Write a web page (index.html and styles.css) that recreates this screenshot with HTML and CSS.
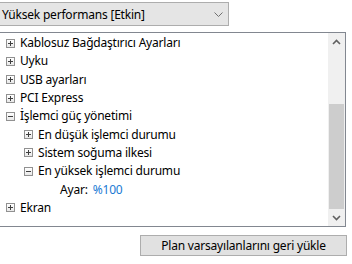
FILE: index.html
```html
<!DOCTYPE html>
<html lang="tr">

<head>
	<meta charset="UTF-8">
	<title>Güç Seçenekleri</title>
	<link rel="stylesheet" href="styles.css">
</head>

<body>
	<div class="page">
		<div class="combo">
			<span class="combo-text">Yüksek performans [Etkin]</span>
			<svg class="chevron" width="9" height="5" viewBox="0 0 9 5"><path d="M0.5 0.5 L4.5 4.5 L8.5 0.5" fill="none" stroke="#707070"/></svg>
		</div>

		<div class="tree">
			<div class="rows">
				<div class="row lvl0"><span class="exp plus"></span>Kablosuz Bağdaştırıcı Ayarları</div>
				<div class="row lvl0"><span class="exp plus"></span>Uyku</div>
				<div class="row lvl0"><span class="exp plus"></span>USB ayarları</div>
				<div class="row lvl0"><span class="exp plus"></span>PCI Express</div>
				<div class="row lvl0"><span class="exp minus"></span>İşlemci güç yönetimi</div>
				<div class="row lvl1"><span class="exp plus"></span>En düşük işlemci durumu</div>
				<div class="row lvl1"><span class="exp plus"></span>Sistem soğuma ilkesi</div>
				<div class="row lvl1"><span class="exp minus"></span>En yüksek işlemci durumu</div>
				<div class="row lvl2">Ayar: <span class="value">%100</span></div>
				<div class="row lvl0"><span class="exp plus"></span>Ekran</div>
			</div>
			<div class="scrollbar">
				<div class="arrow">
					<svg width="9" height="6" viewBox="0 0 9 6"><path d="M1 5 L4.5 1.5 L8 5" fill="none" stroke="#606060" stroke-width="1.6"/></svg>
				</div>
				<div class="track">
					<div class="thumb"></div>
				</div>
				<div class="arrow">
					<svg width="9" height="6" viewBox="0 0 9 6"><path d="M1 1 L4.5 4.5 L8 1" fill="none" stroke="#606060" stroke-width="1.6"/></svg>
				</div>
			</div>
		</div>

		<div class="actions">
			<button type="button" class="btn">Plan varsayılanlarını geri yükle</button>
		</div>
	</div>
</body>

</html>
```

FILE: styles.css
```css
html {
	font-size: 12px;
}

body {
	margin: 0;
	background: #fff;
	font-family: "Noto Sans", "Open Sans", sans-serif;
	font-size: 12px;
	letter-spacing: -0.2px;
	color: #000;
}

.page {
	margin-left: -10px;
	padding-top: 2px;
}

.combo {
	width: 239px;
	height: 24px;
	border: 1px solid #adadad;
	background: #e5e5e5;
	display: flex;
	align-items: center;
	justify-content: space-between;
	padding: 0 5px 0 11px;
	box-sizing: border-box;
}

.chevron {
	margin-top: 1px;
}

.tree {
	margin-top: 6px;
	width: 356px;
	height: 195px;
	border: 1px solid #828790;
	box-sizing: border-box;
	display: flex;
}

.rows {
	flex: 1;
	padding-top: 1px;
}

.row {
	height: 18.3px;
	line-height: 18px;
	display: flex;
	align-items: center;
	white-space: nowrap;
}

.lvl0 {
	padding-left: 15px;
}

.lvl1 {
	padding-left: 33px;
}

.lvl2 {
	padding-left: 69px;
}

.exp {
	width: 9px;
	height: 9px;
	box-sizing: border-box;
	border: 1px solid #919191;
	background: linear-gradient(#fff, #e8e8e8);
	margin-right: 5px;
	position: relative;
	flex: none;
}

.exp::before,
.plus::after {
	content: "";
	position: absolute;
	background: #3f3f3f;
}

.exp::before {
	left: 1px;
	top: 3px;
	width: 5px;
	height: 1px;
}

.plus::after {
	left: 3px;
	top: 1px;
	width: 1px;
	height: 5px;
}

.value {
	color: #1a7ad4;
	margin-left: 5px;
}

.scrollbar {
	width: 17px;
	background: #f0f0f0;
	display: flex;
	flex-direction: column;
}

.arrow {
	height: 17px;
	display: flex;
	align-items: center;
	justify-content: center;
}

.track {
	flex: 1;
	display: flex;
	flex-direction: column;
	justify-content: flex-end;
}

.thumb {
	height: 105px;
	margin: 0 1px;
	background: #cdcdcd;
}

.actions {
	display: flex;
	justify-content: flex-end;
	padding-right: 5px;
	margin-top: 8px;
}

.btn {
	width: 207px;
	height: 21px;
	border: 1px solid #adadad;
	background: #e1e1e1;
	font-family: inherit;
	font-size: 12px;
	letter-spacing: -0.2px;
	padding: 0;
	color: #000;
}
```
